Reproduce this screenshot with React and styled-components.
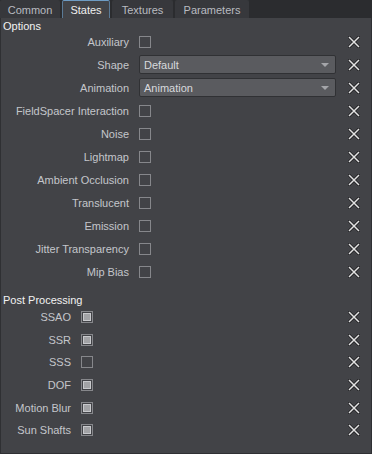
import styled, { createGlobalStyle } from "styled-components";

const GlobalStyle = createGlobalStyle`
  html, body {
    margin: 0;
    padding: 0;
    background: #2b2c2f;
  }
  * { box-sizing: border-box; }
`;

const Container = styled.div`
  width: 372px;
  height: 454px;
  display: flex;
  flex-direction: column;
  font-family: "Liberation Sans", Arial, sans-serif;
  font-size: 11px;
  background: #2b2c2f;
  overflow: hidden;
`;

const TabBar = styled.div`
  display: flex;
  gap: 2px;
  height: 18px;
`;

const Tab = styled.div`
  width: ${(p) => p.w}px;
  height: 18px;
  display: flex;
  align-items: center;
  justify-content: center;
  color: ${(p) => (p.active ? "#f0f0f0" : "#b9bbc0")};
  background: ${(p) => (p.active ? "#424347" : "#37383c")};
  border-top: 1px solid ${(p) => (p.active ? "#6e9cc4" : "#37383c")};
  border-left: 1px solid ${(p) => (p.active ? "#5a7a96" : "#37383c")};
  border-right: 1px solid ${(p) => (p.active ? "#5a7a96" : "#37383c")};
  border-radius: 2px 2px 0 0;
`;

const Panel = styled.div`
  flex: 1;
  background: #424347;
  border: 1px solid #2f3033;
  border-top: none;
`;

const SectionTitle = styled.div`
  color: #f2f2f2;
  padding: 1px 0 0 2px;
  height: ${(p) => p.h}px;
  line-height: 14px;
`;

const Row = styled.div`
  display: grid;
  grid-template-columns: ${(p) => p.label}px 1fr 35px;
  align-items: center;
  height: ${(p) => p.h}px;
`;

const Label = styled.div`
  text-align: right;
  padding-right: 10px;
  color: #c4c6cb;
  white-space: nowrap;
`;

const Check = styled.div`
  width: 12px;
  height: 12px;
  border: 1px solid #86878b;
  display: flex;
  align-items: center;
  justify-content: center;
  &::after {
    content: "";
    display: ${(p) => (p.checked ? "block" : "none")};
    width: 6px;
    height: 6px;
    background: #a2a3a6;
    border: 1px solid #c8c9cc;
  }
`;

const Select = styled.div`
  height: 19px;
  width: 100%;
  background: #5a5b5f;
  border: 1px solid #303134;
  border-radius: 2px;
  color: #d8d9dd;
  display: flex;
  align-items: center;
  justify-content: space-between;
  padding: 0 6px 0 4px;
`;

const Arrow = styled.span`
  width: 0;
  height: 0;
  border-left: 4px solid transparent;
  border-right: 4px solid transparent;
  border-top: 4px solid #a4a5a9;
`;

const Remove = styled.div`
  display: flex;
  justify-content: center;
  padding-left: 1px;
`;

const Gap = styled.div`
  height: ${(p) => p.h}px;
`;

const XIcon = () => (
  <svg width="12" height="12" viewBox="0 0 12 12">
    <path d="M1.5 1.5 L10.5 10.5 M10.5 1.5 L1.5 10.5" stroke="#1c1c1e" strokeWidth="3" strokeLinecap="square" />
    <path d="M1.5 1.5 L10.5 10.5 M10.5 1.5 L1.5 10.5" stroke="#e2e2e2" strokeWidth="1.5" strokeLinecap="square" />
  </svg>
);

const options = [
  { label: "Auxiliary", type: "check" },
  { label: "Shape", type: "select", value: "Default" },
  { label: "Animation", type: "select", value: "Animation" },
  { label: "FieldSpacer Interaction", type: "check" },
  { label: "Noise", type: "check" },
  { label: "Lightmap", type: "check" },
  { label: "Ambient Occlusion", type: "check" },
  { label: "Translucent", type: "check" },
  { label: "Emission", type: "check" },
  { label: "Jitter Transparency", type: "check" },
  { label: "Mip Bias", type: "check" },
];

const post = [
  { label: "SSAO", checked: true },
  { label: "SSR", checked: true },
  { label: "SSS", checked: false },
  { label: "DOF", checked: true },
  { label: "Motion Blur", checked: true },
  { label: "Sun Shafts", checked: true },
];

const App = () => {
  return (
    <Container>
      <GlobalStyle />
      <TabBar>
        <Tab w={60}>Common</Tab>
        <Tab w={48} active>States</Tab>
        <Tab w={61}>Textures</Tab>
        <Tab w={74}>Parameters</Tab>
      </TabBar>
      <Panel>
        <SectionTitle h={12}>Options</SectionTitle>
        {options.map((o) => (
          <Row key={o.label} label={138} h={23}>
            <Label>{o.label}</Label>
            {o.type === "check" ? (
              <Check />
            ) : (
              <Select>
                {o.value}
                <Arrow />
              </Select>
            )}
            <Remove>
              <XIcon />
            </Remove>
          </Row>
        ))}
        <Gap h={9} />
        <SectionTitle h={14}>Post Processing</SectionTitle>
        {post.map((o) => (
          <Row key={o.label} label={80} h={22.6}>
            <Label>{o.label}</Label>
            <Check checked={o.checked} />
            <Remove>
              <XIcon />
            </Remove>
          </Row>
        ))}
      </Panel>
    </Container>
  );
};

export default App;
